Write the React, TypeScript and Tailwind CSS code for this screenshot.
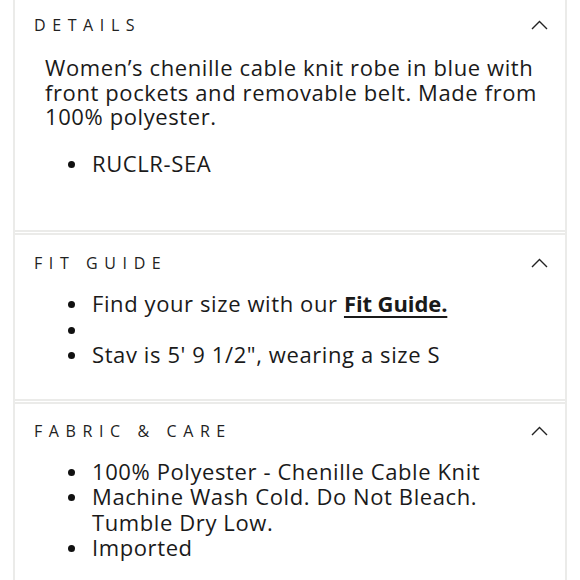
import React from "react";

const Chevron = () => (
  <svg width="17" height="10" viewBox="0 0 17 10" className="block">
    <path d="M1 9 L8.5 1.5 L16 9" fill="none" stroke="#222" strokeWidth="1.4" />
  </svg>
);

const Header = ({ title }: { title: string }) => (
  <div className="flex items-center justify-between pl-[19px] pr-[17px] h-[20px]">
    <span className="text-[16px] tracking-[6.6px] text-[#222] leading-none">{title}</span>
    <Chevron />
  </div>
);

const Bullet = ({ children }: { children?: React.ReactNode }) => (
  <li className="flex items-start">
    <span className="w-[47px] shrink-0 flex justify-center pl-[5px] pt-[10px]">
      <span className="block w-[7px] h-[7px] rounded-full bg-[#111]"></span>
    </span>
    <span className="flex-1">{children}</span>
  </li>
);

export default function App() {
  return (
    <div
      className="w-[580px] h-[580px] overflow-hidden bg-white text-[#1a1a1a]"
      style={{ fontFamily: '"Open Sans", "DejaVu Sans", sans-serif' }}
    >
      <div className="mx-[13px] border-x-2 border-[#ebebe9] h-full">
        <section className="border-b-2 border-[#ebebe9] h-[232px] pt-[15px]">
          <Header title="DETAILS" />
          <div className="pl-[30px] pr-[14px] pt-[20px] text-[22px] tracking-[0.6px] leading-[24.5px]">
            <p>Women’s chenille cable knit robe in blue with front pockets and removable belt. Made from 100% polyester.</p>
            <ul className="mt-[22px]">
              <Bullet>RUCLR-SEA</Bullet>
            </ul>
          </div>
        </section>
        <section className="mt-[1px] border-y-2 border-[#ebebe9] h-[168px] pt-[18px]">
          <Header title="FIT GUIDE" />
          <ul className="pt-[18px] pl-[30px] text-[22px] tracking-[0.6px] leading-[25.5px]">
            <Bullet>
              Find your size with our{" "}
              <span className="font-bold tracking-[-0.1px] underline underline-offset-[4px] decoration-[1.5px]">Fit Guide.</span>
            </Bullet>
            <Bullet>{"\u00a0"}</Bullet>
            <Bullet>Stav is 5' 9 1/2", wearing a size S</Bullet>
          </ul>
        </section>
        <section className="mt-[1px] border-t-2 border-[#ebebe9] pt-[17px]">
          <Header title="FABRIC & CARE" />
          <ul className="pt-[18px] pl-[30px] text-[22px] tracking-[0.6px] leading-[25.3px]">
            <Bullet>100% Polyester - Chenille Cable Knit</Bullet>
            <Bullet>Machine Wash Cold. Do Not Bleach.<br />Tumble Dry Low.</Bullet>
            <Bullet>Imported</Bullet>
          </ul>
        </section>
      </div>
    </div>
  );
}
